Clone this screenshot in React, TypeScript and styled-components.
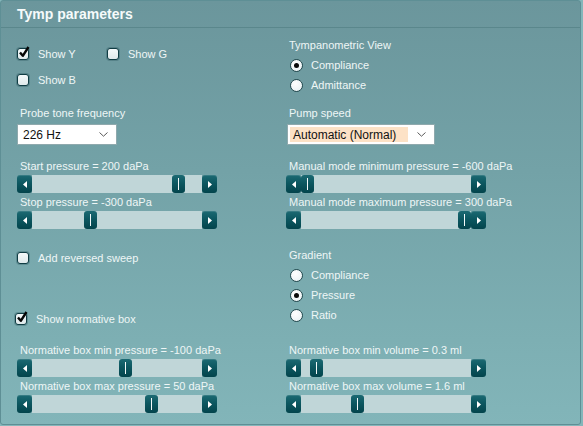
import styled, { createGlobalStyle } from "styled-components";

const TRACK = 170;
const THUMB = 13;

const App = () => {
  return (
    <>
      <GlobalStyle />
      <Panel>
        <Header>
          <Title>Tymp parameters</Title>
        </Header>
        <Body>
          <Section $top={0} $height={78}>
            <Cell $pad={19}>
              <CheckLine>
                <CheckOption checked label="Show Y" width={90} />
                <CheckOption label="Show G" />
              </CheckLine>
              <CheckLine $gap={12}>
                <CheckOption label="Show B" />
              </CheckLine>
            </Cell>
            <Cell $pad={10}>
              <FieldLabel>Tympanometric View</FieldLabel>
              <RadioGroup>
                <RadioOption checked label="Compliance" />
                <RadioOption label="Admittance" />
              </RadioGroup>
            </Cell>
          </Section>

          <Section $top={0}>
            <Cell>
              <FieldLabel>Probe tone frequency</FieldLabel>
              <Dropdown $width={100}>
                <DropdownText>226 Hz</DropdownText>
                <Chevron />
              </Dropdown>
            </Cell>
            <Cell>
              <FieldLabel>Pump speed</FieldLabel>
              <Dropdown $width={148} $shift={1}>
                <DropdownText $selected>Automatic (Normal)</DropdownText>
                <Chevron />
              </Dropdown>
            </Cell>
          </Section>

          <Section $top={14}>
            <Cell>
              <SliderField label="Start pressure = 200 daPa" value={200} min={-600} max={300} />
              <SliderField label="Stop pressure = -300 daPa" value={-300} min={-600} max={300} />
            </Cell>
            <Cell>
              <SliderField label="Manual mode minimum pressure = -600 daPa" value={-600} min={-600} max={300} />
              <SliderField label="Manual mode maximum pressure = 300 daPa" value={300} min={-600} max={300} />
            </Cell>
          </Section>

          <Section $top={19} $height={78}>
            <Cell $pad={3}>
              <CheckLine>
                <CheckOption label="Add reversed sweep" />
              </CheckLine>
              <CheckLine $gap={47} $shift={-2}>
                <CheckOption checked label="Show normative box" />
              </CheckLine>
            </Cell>
            <Cell>
              <FieldLabel>Gradient</FieldLabel>
              <RadioGroup>
                <RadioOption label="Compliance" />
                <RadioOption checked label="Pressure" />
                <RadioOption label="Ratio" />
              </RadioGroup>
            </Cell>
          </Section>

          <Section $top={17}>
            <Cell>
              <SliderField label="Normative box min pressure = -100 daPa" value={-100} min={-600} max={300} />
              <SliderField label="Normative box max pressure = 50 daPa" value={50} min={-600} max={300} />
            </Cell>
            <Cell>
              <SliderField label="Normative box min volume = 0.3 ml" value={0.3} min={0} max={5} />
              <SliderField label="Normative box max volume = 1.6 ml" value={1.6} min={0} max={5} />
            </Cell>
          </Section>
        </Body>
      </Panel>
    </>
  );
};

const CheckOption = ({ label, checked = false, width }: { label: string; checked?: boolean; width?: number }) => (
  <CheckItem $width={width}>
    <CheckBox>
      {checked && (
        <svg width="12" height="13" viewBox="0 0 12 13">
          <path d="M2 6.5 L4.8 9.8 L10.5 1" fill="none" stroke="#050505" strokeWidth="2.4" strokeLinejoin="round" />
        </svg>
      )}
    </CheckBox>
    <span>{label}</span>
  </CheckItem>
);

const RadioOption = ({ label, checked = false }: { label: string; checked?: boolean }) => (
  <RadioItem>
    <RadioCircle>{checked && <RadioDot />}</RadioCircle>
    <span>{label}</span>
  </RadioItem>
);

const Chevron = () => (
  <ChevronIcon width="9" height="5" viewBox="0 0 9 5">
    <polyline points="0.5,0.5 4.5,4.2 8.5,0.5" fill="none" stroke="#5a5a5a" strokeWidth="1" />
  </ChevronIcon>
);

const Arrow = ({ dir }: { dir: "left" | "right" }) => (
  <svg width="4" height="7" viewBox="0 0 4 7">
    {dir === "left" ? <polygon points="4,0 4,7 0,3.5" fill="#ffffff" /> : <polygon points="0,0 0,7 4,3.5" fill="#ffffff" />}
  </svg>
);

const SliderField = ({ label, value, min, max }: { label: string; value: number; min: number; max: number }) => {
  const frac = (value - min) / (max - min);
  return (
    <SliderBlock>
      <FieldLabel>{label}</FieldLabel>
      <SliderBar>
        <StepButton>
          <Arrow dir="left" />
        </StepButton>
        <Track>
          <Thumb style={{ left: Math.round(frac * (TRACK - THUMB)) }} />
        </Track>
        <StepButton>
          <Arrow dir="right" />
        </StepButton>
      </SliderBar>
    </SliderBlock>
  );
};

const GlobalStyle = createGlobalStyle`
  html, body {
    margin: 0;
    padding: 0;
  }

  body {
    background: #84b6ba;
    font-family: "Liberation Sans", Arial, sans-serif;
    font-size: 11px;
    color: #eef6f6;
  }
`;

const Panel = styled.div`
  box-sizing: border-box;
  width: 581px;
  height: 425px;
  border: 1px solid #5e8f95;
  border-radius: 3px;
  background: linear-gradient(180deg, #6b969c 0%, #73a2a7 40%, #7dafb3 80%, #82b5b9 100%);
  overflow: hidden;
`;

const Header = styled.div`
  display: flex;
  align-items: center;
  height: 26px;
  padding-left: 16px;
  border-bottom: 1px solid #5a878c;
`;

const Title = styled.h1`
  margin: 0;
  font-size: 14px;
  font-weight: bold;
  color: #f6fbfb;
`;

const Body = styled.div`
  padding-left: 16px;
`;

const Section = styled.div<{ $top: number; $height?: number }>`
  display: grid;
  grid-template-columns: 269px 200px;
  align-items: start;
  margin-top: ${(p) => p.$top}px;
  height: ${(p) => (p.$height ? `${p.$height}px` : "auto")};
`;

const Cell = styled.div<{ $pad?: number }>`
  display: flex;
  flex-direction: column;
  padding-top: ${(p) => p.$pad ?? 0}px;
`;

const FieldLabel = styled.div`
  height: 14px;
  line-height: 14px;
  padding-left: 3px;
  white-space: nowrap;
`;

const CheckLine = styled.div<{ $gap?: number; $shift?: number }>`
  display: flex;
  align-items: center;
  height: 14px;
  margin-top: ${(p) => p.$gap ?? 0}px;
  margin-left: ${(p) => p.$shift ?? 0}px;
`;

const CheckItem = styled.label<{ $width?: number }>`
  display: flex;
  align-items: center;
  gap: 9px;
  width: ${(p) => (p.$width ? `${p.$width}px` : "auto")};
  white-space: nowrap;
`;

const CheckBox = styled.span`
  position: relative;
  flex: none;
  box-sizing: border-box;
  width: 12px;
  height: 12px;
  border: 1px solid #0f3c43;
  border-radius: 3px;
  background: linear-gradient(180deg, #f4f9fa, #dfe9eb);
  box-shadow: 0 0 0 1px rgba(20, 60, 66, 0.25);

  svg {
    position: absolute;
    left: 0;
    top: -3px;
  }
`;

const RadioGroup = styled.div`
  display: flex;
  flex-direction: column;
  gap: 6px;
  margin-top: 6px;
  margin-left: 4px;
`;

const RadioItem = styled.label`
  display: flex;
  align-items: center;
  gap: 8px;
  height: 14px;
`;

const RadioCircle = styled.span`
  flex: none;
  box-sizing: border-box;
  display: flex;
  align-items: center;
  justify-content: center;
  width: 13px;
  height: 13px;
  border: 1px solid #23494e;
  border-radius: 50%;
  background: radial-gradient(circle at 40% 35%, #ffffff, #e6eff1);
`;

const RadioDot = styled.span`
  width: 5px;
  height: 5px;
  border-radius: 50%;
  background: #0a0a0a;
`;

const Dropdown = styled.div<{ $width: number; $shift?: number }>`
  box-sizing: border-box;
  display: flex;
  align-items: center;
  justify-content: space-between;
  width: ${(p) => p.$width}px;
  height: 21px;
  margin-top: 4px;
  margin-left: ${(p) => p.$shift ?? 0}px;
  padding: 2px 8px 2px 2px;
  background: #ffffff;
  border: 1px solid #8fa9ad;
  color: #111;
  font-size: 12px;
`;

const DropdownText = styled.span<{ $selected?: boolean }>`
  display: flex;
  align-items: center;
  height: 15px;
  padding: 0 ${(p) => (p.$selected ? "12px" : "0")} 0 3px;
  background: ${(p) => (p.$selected ? "#fde2c6" : "transparent")};
  white-space: nowrap;
`;

const ChevronIcon = styled.svg`
  flex: none;
`;

const SliderBlock = styled.div`
  display: flex;
  flex-direction: column;
  gap: 2px;

  & + & {
    margin-top: 2px;
  }
`;

const SliderBar = styled.div`
  display: flex;
  width: 200px;
  height: 18px;
`;

const StepButton = styled.div`
  display: flex;
  align-items: center;
  justify-content: center;
  width: 15px;
  height: 18px;
  border-radius: 3px;
  background: linear-gradient(180deg, #1c6a73 0%, #0c5760 45%, #03444c 100%);
  box-shadow: inset 0 1px 0 rgba(255, 255, 255, 0.12);
`;

const Track = styled.div`
  position: relative;
  flex: 1;
  height: 18px;
  background: #c0d6d8;
`;

const Thumb = styled.div`
  position: absolute;
  top: 0;
  width: ${THUMB}px;
  height: 18px;
  border-radius: 3px;
  background: linear-gradient(180deg, #1c6a73 0%, #0c5760 45%, #03444c 100%);

  &::after {
    content: "";
    position: absolute;
    left: 6px;
    top: 3px;
    width: 1px;
    height: 12px;
    background: #f4fafa;
  }
`;

export default App;
